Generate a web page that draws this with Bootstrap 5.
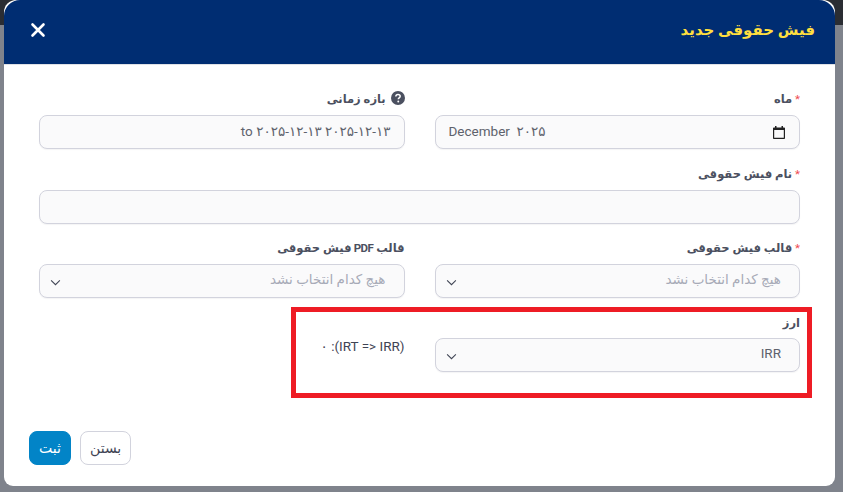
<!DOCTYPE html>
<html lang="fa" dir="rtl">
<head>
<meta charset="utf-8">
<title>فیش حقوقی جدید</title>
<link rel="stylesheet" href="https://cdn.jsdelivr.net/npm/bootstrap@5.3.0/dist/css/bootstrap.min.css">
<style>
html, body { height: 492px; overflow: hidden; }
body { background: #7f838c; font-family: "Roboto", "DejaVu Sans", sans-serif; font-size: 13px; color: #3f4454; }
.top-strip { position: absolute; top: 0; left: 0; right: 0; height: 25px; background: #2a2d33; }
.slip-dialog { position: relative; width: 831px; margin: 0 8px 0 4px; }
.slip-content { height: 485.500px; border: 0; border-radius: 0 0 9px 9px; border-top-left-radius: 12px; border-top-right-radius: 12px; background: #fff; overflow: hidden; }
.slip-header { height: 65px; background: #002d72; padding: 0 20px 0 25px; border: 0; border-bottom: 1px solid #dfe1e6; border-radius: 16px 16px 0 0; display: flex; justify-content: space-between; align-items: center; }
.slip-title { font-size: 15px; font-weight: 700; letter-spacing: -.2px; color: #ffdf3f; margin: 0 0 4px; }
.slip-close { background: none; border: 0; padding: 0; width: 18px; height: 18px; line-height: 0; margin-bottom: 4px; }
.slip-body { padding: 24px 35px 0; }
.field-row { --bs-gutter-x: 30px; --bs-gutter-y: 0; }
.field-label { display: block; font-size: 11.500px; font-weight: 700; letter-spacing: -.55px; color: #4b5060; line-height: 21px; margin: 0 0 5px; }
.field-req { color: #ef4b52; font-weight: 400; }
.field-gap { margin-top: 14.500px; }
.field-input, .field-select { height: 34px; font-size: 13.500px; color: #5e626c; background-color: #fafafb; border: 1px solid #d2d3dd; border-radius: 8px; box-shadow: 0 1px 1px rgba(60,60,80,.06); }
.field-input { padding: 0 13px 3px; }
.field-month { background-image: url("data:image/svg+xml,%3Csvg xmlns='http://www.w3.org/2000/svg' viewBox='0 0 12 13'%3E%3Cpath fill='%23222' d='M2 0h1.500v1.500h5V0H10v1.500h1.200c.5 0 .8.4.8.8v9.900c0 .5-.4.8-.8.8H.8c-.5 0-.8-.4-.8-.8V2.300c0-.5.4-.8.8-.8H2zM1.200 4v7.800h9.600V4z'/%3E%3C/svg%3E"); background-repeat: no-repeat; background-size: 12px 13px; background-position: right 14px center; }
.field-select { padding: 0 18px 3px 36px; background-image: url("data:image/svg+xml,%3Csvg xmlns='http://www.w3.org/2000/svg' viewBox='0 0 12 8'%3E%3Cpath fill='none' stroke='%233f4454' stroke-width='1.200' d='M1 1.500l5 5 5-5'/%3E%3C/svg%3E"); background-position: left 10px top 14px; background-size: 11px 7px; background-repeat: no-repeat; }
.field-select.is-empty { color: #a7aab7; }
.help-dot { display: inline-block; vertical-align: -2px; margin-left: 2px; }
.rate-note { font-size: 13.500px; color: #3f4454; padding-top: 23px; }
.cur-label { line-height: 20px; margin-bottom: 5.500px; }
.slip-footer { position: absolute; left: 25px; bottom: 20.500px; padding: 0; border: 0; margin: 0; display: flex; gap: 9px; flex-direction: row-reverse; }
.slip-btn { height: 34px; font-size: 14px; border-radius: 8px; padding: 0 9px; line-height: 32px; margin: 0; }
.slip-save { background: #0284c7; color: #fff; border: 1px solid #0284c7; min-width: 42px; font-weight: 500; }
.slip-cancel { background: #fff; color: #3f4454; border: 1px solid #d2d3dd; min-width: 51px; }
.mark-box { position: absolute; left: 287px; top: 307px; width: 521px; height: 91px; border: 5px solid #ee1c25; pointer-events: none; }
</style>
</head>
<body>
<div class="top-strip"></div>
<div class="slip-dialog">
  <div class="modal-content slip-content">
    <div class="modal-header slip-header">
      <h5 class="modal-title slip-title">فیش حقوقی جدید</h5>
      <button type="button" class="slip-close" aria-label="بستن">
        <svg width="18" height="18" viewBox="0 0 18 18"><path d="M3.500 3.500l11 11M14.500 3.500l-11 11" stroke="#fff" stroke-width="2.600" stroke-linecap="round"/></svg>
      </button>
    </div>
    <div class="modal-body slip-body">
      <div class="row field-row">
        <div class="col-6">
          <label class="field-label"><span class="field-req">*</span> ماه</label>
          <input class="form-control field-input field-month" dir="ltr" value="December  ۲۰۲۵">
        </div>
        <div class="col-6">
          <label class="field-label">
            <svg class="help-dot" width="14" height="14" viewBox="0 0 16 16"><circle cx="8" cy="8" r="8" fill="#4b5060"/><path d="M5.500 6.200C5.600 4.700 6.700 4 8 4c1.400 0 2.500.8 2.500 2.100 0 1.900-2.200 1.800-2.200 3.400" fill="none" stroke="#fff" stroke-width="1.700"/><circle cx="8.300" cy="12" r="1.100" fill="#fff"/></svg>
            بازه زمانی</label>
          <input class="form-control field-input" value="۲۰۲۵-۱۲-۱۳ ۲۰۲۵-۱۲-۱۳ to">
        </div>
      </div>
      <div class="field-gap">
        <label class="field-label"><span class="field-req">*</span> نام فیش حقوقی</label>
        <input class="form-control field-input" value="">
      </div>
      <div class="row field-row field-gap">
        <div class="col-6">
          <label class="field-label"><span class="field-req">*</span> قالب فیش حقوقی</label>
          <select class="form-select field-select is-empty"><option>هیچ کدام انتخاب نشد</option></select>
        </div>
        <div class="col-6">
          <label class="field-label">قالب PDF فیش حقوقی</label>
          <select class="form-select field-select is-empty"><option>هیچ کدام انتخاب نشد</option></select>
        </div>
      </div>
      <div class="row field-row field-gap">
        <div class="col-6">
          <label class="field-label cur-label">ارز</label>
          <select class="form-select field-select"><option>IRR</option></select>
        </div>
        <div class="col-6 rate-note"><span dir="rtl">(IRT =&gt; IRR): ۰</span></div>
      </div>
    </div>
    <div class="modal-footer slip-footer">
      <button type="button" class="btn slip-btn slip-save">ثبت</button>
      <button type="button" class="btn slip-btn slip-cancel">بستن</button>
    </div>
  </div>
  <div class="mark-box"></div>
</div>
<script src="https://cdn.jsdelivr.net/npm/bootstrap@5.3.0/dist/js/bootstrap.bundle.min.js"></script>
</body>
</html>
